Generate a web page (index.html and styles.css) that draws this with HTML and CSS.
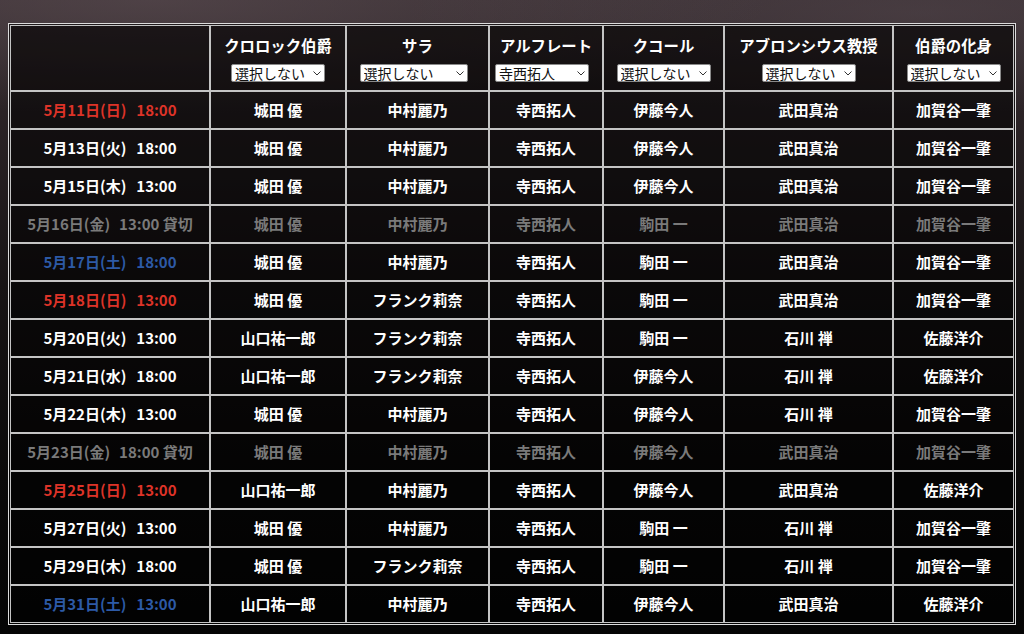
FILE: index.html
```html
<!DOCTYPE html>
<html lang="ja">
<head>
<meta charset="utf-8">
<title>キャストスケジュール</title>
<link rel="stylesheet" href="styles.css">
</head>
<body>
<table class="schedule">
  <thead>
    <tr>
      <th class="c0"></th>
      <th class="c1"><div class="role">クロロック伯爵</div><span class="sel"><select><option>選択しない</option><option>城田 優</option><option>山口祐一郎</option></select><svg class="chev" width="8" height="5" viewBox="0 0 8 5"><path d="M0.5 0.5 L4 4 L7.5 0.5" fill="none" stroke="#333" stroke-width="1"/></svg></span></th>
      <th class="c2"><div class="role">サラ</div><span class="sel wide shift"><select><option>選択しない</option><option>中村麗乃</option><option>フランク莉奈</option></select><svg class="chev" width="8" height="5" viewBox="0 0 8 5"><path d="M0.5 0.5 L4 4 L7.5 0.5" fill="none" stroke="#333" stroke-width="1"/></svg></span></th>
      <th class="c3"><div class="role">アルフレート</div><span class="sel shift"><select><option>寺西拓人</option><option>選択しない</option></select><svg class="chev" width="8" height="5" viewBox="0 0 8 5"><path d="M0.5 0.5 L4 4 L7.5 0.5" fill="none" stroke="#333" stroke-width="1"/></svg></span></th>
      <th class="c4"><div class="role">クコール</div><span class="sel"><select><option>選択しない</option><option>伊藤今人</option><option>駒田 一</option></select><svg class="chev" width="8" height="5" viewBox="0 0 8 5"><path d="M0.5 0.5 L4 4 L7.5 0.5" fill="none" stroke="#333" stroke-width="1"/></svg></span></th>
      <th class="c5"><div class="role">アブロンシウス教授</div><span class="sel"><select><option>選択しない</option><option>武田真治</option><option>石川 禅</option></select><svg class="chev" width="8" height="5" viewBox="0 0 8 5"><path d="M0.5 0.5 L4 4 L7.5 0.5" fill="none" stroke="#333" stroke-width="1"/></svg></span></th>
      <th class="c6"><div class="role">伯爵の化身</div><span class="sel"><select><option>選択しない</option><option>加賀谷一肇</option><option>佐藤洋介</option></select><svg class="chev" width="8" height="5" viewBox="0 0 8 5"><path d="M0.5 0.5 L4 4 L7.5 0.5" fill="none" stroke="#333" stroke-width="1"/></svg></span></th>
    </tr>
  </thead>
  <tbody>
    <tr><td class="date sun">5月11日(日)<span class="time">18:00</span></td><td>城田 優</td><td>中村麗乃</td><td>寺西拓人</td><td>伊藤今人</td><td>武田真治</td><td>加賀谷一肇</td></tr>
    <tr><td class="date">5月13日(火)<span class="time">18:00</span></td><td>城田 優</td><td>中村麗乃</td><td>寺西拓人</td><td>伊藤今人</td><td>武田真治</td><td>加賀谷一肇</td></tr>
    <tr><td class="date">5月15日(木)<span class="time">13:00</span></td><td>城田 優</td><td>中村麗乃</td><td>寺西拓人</td><td>伊藤今人</td><td>武田真治</td><td>加賀谷一肇</td></tr>
    <tr class="closed"><td class="date">5月16日(金)<span class="time">13:00 貸切</span></td><td>城田 優</td><td>中村麗乃</td><td>寺西拓人</td><td>駒田 一</td><td>武田真治</td><td>加賀谷一肇</td></tr>
    <tr><td class="date sat">5月17日(土)<span class="time">18:00</span></td><td>城田 優</td><td>中村麗乃</td><td>寺西拓人</td><td>駒田 一</td><td>武田真治</td><td>加賀谷一肇</td></tr>
    <tr><td class="date sun">5月18日(日)<span class="time">13:00</span></td><td>城田 優</td><td>フランク莉奈</td><td>寺西拓人</td><td>駒田 一</td><td>武田真治</td><td>加賀谷一肇</td></tr>
    <tr><td class="date">5月20日(火)<span class="time">13:00</span></td><td>山口祐一郎</td><td>フランク莉奈</td><td>寺西拓人</td><td>駒田 一</td><td>石川 禅</td><td>佐藤洋介</td></tr>
    <tr><td class="date">5月21日(水)<span class="time">18:00</span></td><td>山口祐一郎</td><td>フランク莉奈</td><td>寺西拓人</td><td>伊藤今人</td><td>石川 禅</td><td>佐藤洋介</td></tr>
    <tr><td class="date">5月22日(木)<span class="time">13:00</span></td><td>城田 優</td><td>中村麗乃</td><td>寺西拓人</td><td>伊藤今人</td><td>石川 禅</td><td>加賀谷一肇</td></tr>
    <tr class="closed"><td class="date">5月23日(金)<span class="time">18:00 貸切</span></td><td>城田 優</td><td>中村麗乃</td><td>寺西拓人</td><td>伊藤今人</td><td>武田真治</td><td>加賀谷一肇</td></tr>
    <tr><td class="date sun">5月25日(日)<span class="time">13:00</span></td><td>山口祐一郎</td><td>中村麗乃</td><td>寺西拓人</td><td>伊藤今人</td><td>武田真治</td><td>佐藤洋介</td></tr>
    <tr><td class="date">5月27日(火)<span class="time">13:00</span></td><td>城田 優</td><td>中村麗乃</td><td>寺西拓人</td><td>駒田 一</td><td>石川 禅</td><td>加賀谷一肇</td></tr>
    <tr><td class="date">5月29日(木)<span class="time">18:00</span></td><td>城田 優</td><td>フランク莉奈</td><td>寺西拓人</td><td>駒田 一</td><td>石川 禅</td><td>加賀谷一肇</td></tr>
    <tr><td class="date sat">5月31日(土)<span class="time">13:00</span></td><td>山口祐一郎</td><td>中村麗乃</td><td>寺西拓人</td><td>伊藤今人</td><td>武田真治</td><td>佐藤洋介</td></tr>
  </tbody>
</table>
</body>
</html>
```

FILE: styles.css
```css
html, body {
  margin: 0;
  height: 100%;
}
body {
  padding: 23px 8px 0 8px;
  box-sizing: border-box;
  overflow: hidden;
  font-family: "Noto Sans CJK JP", "Noto Sans", sans-serif;
  color: #fff;
  background:
    radial-gradient(ellipse 60% 18% at 15% 0%, rgba(95, 80, 85, 0.55), rgba(0,0,0,0) 100%),
    radial-gradient(ellipse 50% 16% at 90% 2%, rgba(85, 72, 78, 0.5), rgba(0,0,0,0) 100%),
    linear-gradient(to bottom, #3a3034 0%, #2b2326 18%, #181415 45%, #0b0a0a 75%, #050505 100%);
}
.schedule {
  width: 1008px;
  table-layout: fixed;
  border-collapse: separate;
  border-spacing: 0;
  border: 1px solid #dcdcdc;
  padding: 1px;
  background: rgba(0, 0, 0, 0.55);
}
.schedule th,
.schedule td {
  box-sizing: border-box;
  border: 1px solid #c4c4c4;
  text-align: center;
  font-weight: 700;
  font-size: 15px;
  padding: 0;
  white-space: nowrap;
}
.schedule th {
  height: 66px;
  padding: 8px 0 8px;
  vertical-align: top;
  line-height: 18px;
  background: rgba(10, 6, 8, 0.25);
}
.schedule td {
  height: 38px;
  line-height: 36px;
}
.c0 { width: 200px; }
.c1 { width: 136px; }
.c2 { width: 143px; }
.c3 { width: 114px; }
.c4 { width: 121px; }
.c5 { width: 169px; }
.c6 { width: 121px; }
.role {
  line-height: 22px;
  height: 22px;
  margin-bottom: 8px;
  font-size: 15.4px;
}
.sel {
  position: relative;
  display: block;
  margin: 0 auto;
  width: 94px;
  height: 18px;
}
.sel.wide {
  width: 108px;
}
.sel.shift {
  left: -4px;
}
.sel select {
  appearance: none;
  -webkit-appearance: none;
  display: block;
  width: 100%;
  height: 18px;
  margin: 0;
  padding: 0 14px 0 3px;
  border: 1px solid #8a8a8a;
  border-radius: 2px;
  background: #fff;
  color: #111;
  font-family: "Noto Sans CJK JP", sans-serif;
  font-weight: 400;
  font-size: 14px;
  line-height: 16px;
  text-align: left;
}
.chev {
  position: absolute;
  right: 4px;
  top: 7px;
  pointer-events: none;
}
.date .time {
  margin-left: 10px;
}
.date.sun {
  color: #dd3328;
}
.date.sat {
  color: #2d5aa6;
}
.closed td {
  color: #7a7a7a;
}
.closed .date .time {
  margin-left: 9px;
}
```
